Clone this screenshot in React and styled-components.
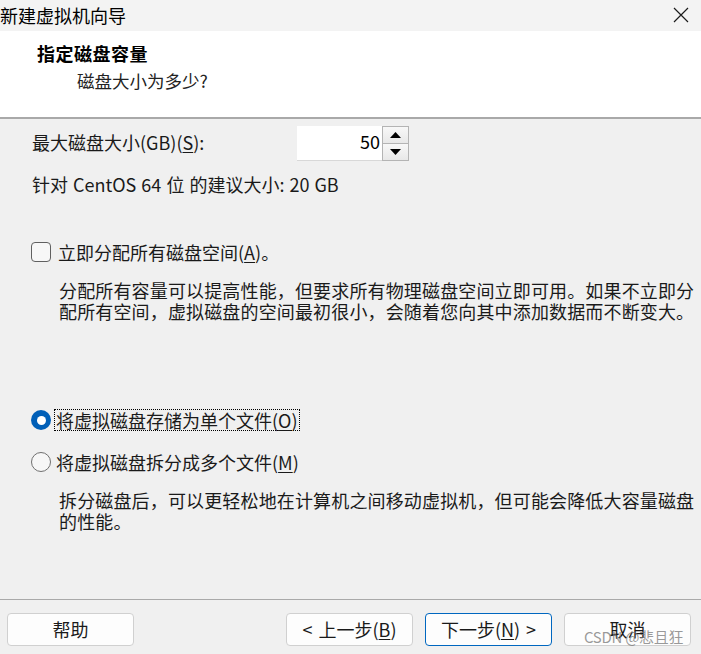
import React from "react";
import styled, { createGlobalStyle } from "styled-components";

const Global = createGlobalStyle`
  html, body { margin: 0; padding: 0; background: #f0f0f0; }
  body { font-family: "Noto Sans CJK SC", "Noto Sans", sans-serif; color: #1a1a1a; }
  * { box-sizing: border-box; }
`;

const Window = styled.div`
  width: 701px;
  height: 654px;
  display: flex;
  flex-direction: column;
  background: #f0f0f0;
  position: relative;
  overflow: hidden;
`;

const TitleBar = styled.div`
  height: 31px;
  flex: none;
  background: #f3f3f3;
  display: flex;
  align-items: center;
  justify-content: space-between;
  padding: 0 12px 2px 0;
  font-size: 18px;
  color: #000;
`;

const CloseIcon = () => (
  <svg width="16" height="16" viewBox="0 0 16 16">
    <path d="M1 1 L15 15 M15 1 L1 15" stroke="#1a1a1a" strokeWidth="1.2" fill="none" />
  </svg>
);

const Header = styled.div`
  height: 88px;
  flex: none;
  background: #fff;
  border-bottom: 2px solid #a9a9a9;
  display: flex;
  flex-direction: column;
  padding: 10px 0 0 37px;
`;

const HeaderTitle = styled.div`
  font-size: 18px;
  font-weight: 700;
  line-height: 24px;
  letter-spacing: 0.5px;
  color: #000;
`;

const HeaderSub = styled.div`
  font-size: 17.5px;
  line-height: 24px;
  margin: 4px 0 0 40px;
  color: #222;
`;

const Body = styled.div`
  flex: 1;
  display: flex;
  flex-direction: column;
  padding: 7px 0 0 31px;
  font-size: 18px;
`;

const SizeRow = styled.div`
  display: flex;
  align-items: center;
  height: 35px;
`;

const SizeLabel = styled.div`
  width: 266px;
  padding-left: 1px;
  line-height: 22px;
  padding-bottom: 4px;
`;

const Spin = styled.div`
  display: flex;
  height: 35px;
`;

const SpinInput = styled.div`
  width: 85px;
  height: 35px;
  background: #fff;
  border-bottom: 1px solid #d8d8d8;
  display: flex;
  align-items: center;
  justify-content: flex-end;
  padding: 0 2px 4px 0;
  font-size: 18px;
  color: #000;
`;

const SpinButtons = styled.div`
  display: flex;
  flex-direction: column;
  width: 27px;
  border: 1px solid #b4b4b4;
  background: #f5f5f5;
`;

const SpinBtn = styled.div`
  flex: 1;
  display: flex;
  align-items: center;
  justify-content: center;
  background: linear-gradient(#f8f8f8, #e8e8e8);
  & + & { border-top: 1px solid #b4b4b4; }
`;

const Arrow = ({ up }) => (
  <svg width="11" height="6" viewBox="0 0 11 6">
    <path d={up ? "M0 6 L5.5 0 L11 6 Z" : "M0 0 L5.5 6 L11 0 Z"} fill="#000" />
  </svg>
);

const Line = styled.div`
  line-height: 22px;
  margin-top: ${(p) => p.$mt || 0}px;
  padding-left: 1px;
  word-spacing: 1px;
`;

const OptionRow = styled.div`
  display: flex;
  align-items: center;
  height: 22px;
  margin-top: ${(p) => p.$mt || 0}px;
`;

const Checkbox = styled.div`
  width: 20px;
  height: 20px;
  border: 1.5px solid #606060;
  border-radius: 4px;
  background: #f7f7f7;
  margin-right: 5px;
  flex: none;
`;

const Radio = styled.div`
  width: 20px;
  height: 20px;
  border-radius: 50%;
  flex: none;
  margin-right: 3px;
  ${(p) =>
    p.$on
      ? `background: #005fb8; display:flex; align-items:center; justify-content:center;
         &::after { content: ""; width: 9px; height: 9px; border-radius: 50%; background: #fff; }`
      : `border: 1px solid #707070; background: #f7f7f7;`}
`;

const Label = styled.span`
  line-height: 20px;
  padding: 0 1px;
  border: 1px dotted ${(p) => (p.$focus ? "#000" : "transparent")};
`;

const Desc = styled.div`
  margin: ${(p) => p.$mt}px 0 0 28px;
  width: 640px;
  line-height: 21px;
  letter-spacing: 0.15px;
`;

const U = styled.span`
  text-decoration: underline;
  text-underline-offset: 2px;
`;

const Footer = styled.div`
  height: 55px;
  flex: none;
  border-top: 1px solid #a9a9a9;
  display: flex;
  align-items: flex-start;
  padding: 13px 8px 0 7px;
`;

const Button = styled.div`
  width: 127px;
  height: 33px;
  border-radius: 4px;
  background: #fdfdfd;
  border: 1px solid ${(p) => (p.$primary ? "#0067c0" : "#d0d0d0")};
  display: flex;
  align-items: center;
  justify-content: center;
  font-size: 18px;
  color: #1a1a1a;
  margin-left: ${(p) => p.$ml || 0}px;
  padding-bottom: 2px;
  word-spacing: 2px;
`;

const Watermark = styled.div`
  position: absolute;
  left: 584px;
  top: 626px;
  font-size: 15px;
  color: rgba(120, 120, 120, 0.75);
  letter-spacing: -0.3px;
`;

export default function App() {
  return (
    <>
      <Global />
      <Window>
        <TitleBar>
          <span>新建虚拟机向导</span>
          <CloseIcon />
        </TitleBar>
        <Header>
          <HeaderTitle>指定磁盘容量</HeaderTitle>
          <HeaderSub>磁盘大小为多少?</HeaderSub>
        </Header>
        <Body>
          <SizeRow>
            <SizeLabel>
              最大磁盘大小(GB)(<U>S</U>):
            </SizeLabel>
            <Spin>
              <SpinInput>50</SpinInput>
              <SpinButtons>
                <SpinBtn>
                  <Arrow up />
                </SpinBtn>
                <SpinBtn>
                  <Arrow />
                </SpinBtn>
              </SpinButtons>
            </Spin>
          </SizeRow>
          <Line $mt={12}>针对 CentOS 64 位 的建议大小: 20 GB</Line>
          <OptionRow $mt={46}>
            <Checkbox />
            <Label>
              立即分配所有磁盘空间(<U>A</U>)。
            </Label>
          </OptionRow>
          <Desc $mt={17}>
            分配所有容量可以提高性能，但要求所有物理磁盘空间立即可用。如果不立即分配所有空间，虚拟磁盘的空间最初很小，会随着您向其中添加数据而不断变大。
          </Desc>
          <OptionRow $mt={87}>
            <Radio $on />
            <Label $focus>
              将虚拟磁盘存储为单个文件(<U>O</U>)
            </Label>
          </OptionRow>
          <OptionRow $mt={20}>
            <Radio />
            <Label>
              将虚拟磁盘拆分成多个文件(<U>M</U>)
            </Label>
          </OptionRow>
          <Desc $mt={17}>
            拆分磁盘后，可以更轻松地在计算机之间移动虚拟机，但可能会降低大容量磁盘的性能。
          </Desc>
        </Body>
        <Footer>
          <Button>帮助</Button>
          <Button $ml={152}>
            &lt; 上一步(<U>B</U>)
          </Button>
          <Button $primary $ml={12}>
            下一步(<U>N</U>) &gt;
          </Button>
          <Button $ml={12}>取消</Button>
        </Footer>
        <Watermark>CSDN @悲且狂</Watermark>
      </Window>
    </>
  );
}
